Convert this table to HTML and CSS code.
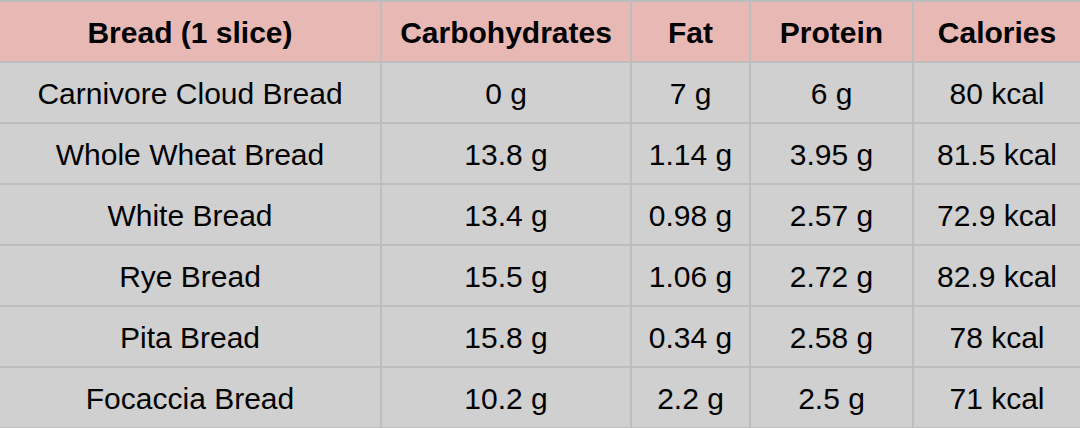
FILE: index.html
```html
<!DOCTYPE html>
<html>
<head>
<meta charset="utf-8">
<link rel="stylesheet" href="styles.css">
</head>
<body>
<table class="nutrition">
  <colgroup>
    <col class="c1"><col class="c2"><col class="c3"><col class="c4"><col class="c5">
  </colgroup>
  <thead>
    <tr><th>Bread (1 slice)</th><th>Carbohydrates</th><th>Fat</th><th>Protein</th><th>Calories</th></tr>
  </thead>
  <tbody>
    <tr><td>Carnivore Cloud Bread</td><td>0 g</td><td>7 g</td><td>6 g</td><td>80 kcal</td></tr>
    <tr><td>Whole Wheat Bread</td><td>13.8 g</td><td>1.14 g</td><td>3.95 g</td><td>81.5 kcal</td></tr>
    <tr><td>White Bread</td><td>13.4 g</td><td>0.98 g</td><td>2.57 g</td><td>72.9 kcal</td></tr>
    <tr><td>Rye Bread</td><td>15.5 g</td><td>1.06 g</td><td>2.72 g</td><td>82.9 kcal</td></tr>
    <tr><td>Pita Bread</td><td>15.8 g</td><td>0.34 g</td><td>2.58 g</td><td>78 kcal</td></tr>
    <tr><td>Focaccia Bread</td><td>10.2 g</td><td>2.2 g</td><td>2.5 g</td><td>71 kcal</td></tr>
  </tbody>
</table>
</body>
</html>
```
FILE: styles.css
```css
html, body {
  margin: 0;
  padding: 0;
  background: #d0d0d0;
  overflow: hidden;
}
.nutrition {
  width: 1080px;
  border-collapse: collapse;
  table-layout: fixed;
  font-family: "Liberation Sans", Arial, sans-serif;
  color: #000;
}
.c1 { width: 381px; }
.c2 { width: 250px; }
.c3 { width: 119px; }
.c4 { width: 163px; }
.c5 { width: 167px; }
.nutrition th,
.nutrition td {
  border: 2px solid #bdbdbd;
  height: 57px;
  padding: 2px 0 0;
  text-align: center;
  vertical-align: middle;
  font-size: 30px;
  line-height: 34px;
}
.nutrition th:first-child,
.nutrition td:first-child { border-left: none; }
.nutrition th:last-child,
.nutrition td:last-child { border-right: none; }
.nutrition th {
  background: #e8b9b4;
  font-weight: bold;
}
.nutrition td {
  background: #d0d0d0;
  font-weight: normal;
}
```
